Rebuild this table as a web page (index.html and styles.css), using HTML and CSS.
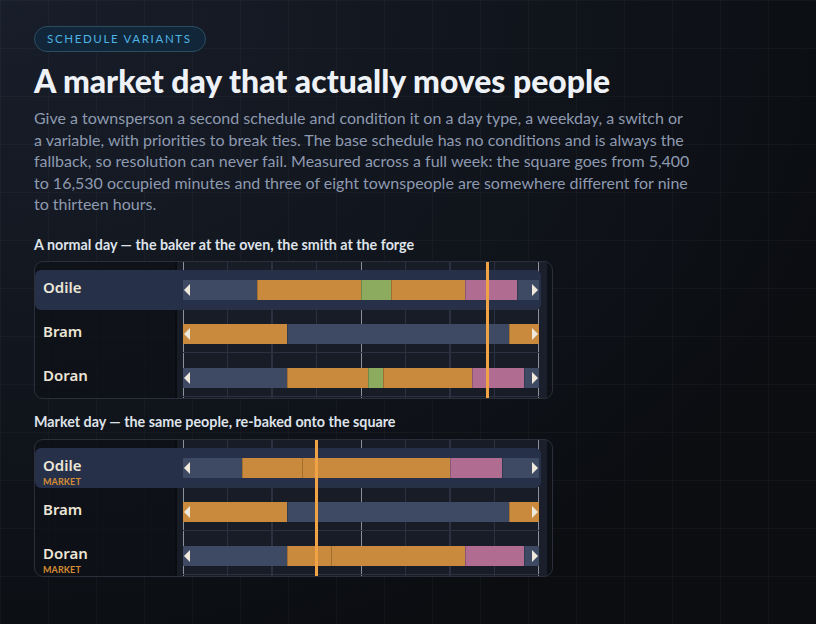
FILE: index.html
```html
<!DOCTYPE html>
<html lang="en">
<head>
<meta charset="utf-8">
<title>Schedule variants</title>
<link rel="stylesheet" href="styles.css">
</head>
<body>
<main class="page">
  <span class="badge">SCHEDULE VARIANTS</span>
  <h1 class="title">A market day that actually moves people</h1>
  <p class="lede">Give a townsperson a second schedule and condition it on a day type, a weekday, a switch or a variable, with priorities to break ties. The base schedule has no conditions and is always the fallback, so resolution can never fail. Measured across a full week: the square goes from 5,400 to 16,530 occupied minutes and three of eight townspeople are somewhere different for nine to thirteen hours.</p>

  <h2 class="label">A normal day — the baker at the oven, the smith at the forge</h2>
  <section class="card">
    <div class="hl r1"></div>

    <div class="name r1">Odile</div>
    <div class="lane r1">
      <div class="bar">
        <span class="seg idle" style="flex-basis:20.833%"></span>
        <span class="seg work" style="flex-basis:29.167%"></span>
        <span class="seg food" style="flex-basis:8.333%"></span>
        <span class="seg work" style="flex-basis:20.833%"></span>
        <span class="seg home" style="flex-basis:14.583%"></span>
        <span class="seg idle" style="flex-basis:6.25%"></span>
        <i class="arr left"></i><i class="arr right"></i>
      </div>
    </div>

    <div class="name r2">Bram</div>
    <div class="lane r2">
      <div class="bar">
        <span class="seg work" style="flex-basis:29.167%"></span>
        <span class="seg idle" style="flex-basis:62.5%"></span>
        <span class="seg work" style="flex-basis:8.333%"></span>
        <i class="arr left"></i><i class="arr right"></i>
      </div>
    </div>

    <div class="name r3">Doran</div>
    <div class="lane r3">
      <div class="bar">
        <span class="seg idle" style="flex-basis:29.167%"></span>
        <span class="seg work" style="flex-basis:22.917%"></span>
        <span class="seg food" style="flex-basis:4.167%"></span>
        <span class="seg work" style="flex-basis:25%"></span>
        <span class="seg home" style="flex-basis:14.583%"></span>
        <span class="seg idle" style="flex-basis:4.167%"></span>
        <i class="arr left"></i><i class="arr right"></i>
      </div>
    </div>

    <div class="now" style="--t:85.417"></div>
  </section>

  <h2 class="label">Market day — the same people, re-baked onto the square</h2>
  <section class="card">
    <div class="hl r1"></div>

    <div class="name r1">Odile<span class="tag">MARKET</span></div>
    <div class="lane r1">
      <div class="bar">
        <span class="seg idle" style="flex-basis:16.667%"></span>
        <span class="seg work" style="flex-basis:16.667%"></span>
        <span class="seg work" style="flex-basis:41.667%"></span>
        <span class="seg home" style="flex-basis:14.583%"></span>
        <span class="seg idle" style="flex-basis:10.417%"></span>
        <i class="arr left"></i><i class="arr right"></i>
      </div>
    </div>

    <div class="name r2">Bram</div>
    <div class="lane r2">
      <div class="bar">
        <span class="seg work" style="flex-basis:29.167%"></span>
        <span class="seg idle" style="flex-basis:62.5%"></span>
        <span class="seg work" style="flex-basis:8.333%"></span>
        <i class="arr left"></i><i class="arr right"></i>
      </div>
    </div>

    <div class="name r3">Doran<span class="tag">MARKET</span></div>
    <div class="lane r3">
      <div class="bar">
        <span class="seg idle" style="flex-basis:29.167%"></span>
        <span class="seg work" style="flex-basis:12.5%"></span>
        <span class="seg work" style="flex-basis:37.5%"></span>
        <span class="seg home" style="flex-basis:16.667%"></span>
        <span class="seg idle" style="flex-basis:4.167%"></span>
        <i class="arr left"></i><i class="arr right"></i>
      </div>
    </div>

    <div class="now" style="--t:37.5"></div>
  </section>
</main>
</body>
</html>
```

FILE: styles.css
```css
* { box-sizing: border-box; }

html, body {
  margin: 0;
  height: 100%;
}

body {
  font-family: "Lato", "Noto Sans", sans-serif;
  color: #e8edf3;
  background-color: #0c0e13;
  background-image:
    linear-gradient(to right, rgba(255,255,255,0.028) 1px, transparent 1px),
    linear-gradient(to bottom, rgba(255,255,255,0.028) 1px, transparent 1px),
    radial-gradient(ellipse 900px 700px at 0% 0%, #181e2a 0%, #11151d 55%, #0b0d11 100%);
  background-size: 48px 48px, 48px 48px, 100% 100%;
  overflow: hidden;
}

.page {
  padding: 26px 0 0 34px;
}

.badge {
  display: inline-block;
  height: 26px;
  line-height: 24px;
  padding: 0 13px 0 12px;
  border: 1px solid #2c4c62;
  border-radius: 13px;
  background: #12263a;
  color: #4fb4e4;
  font-size: 11.5px;
  font-weight: 400;
  letter-spacing: 1.65px;
}

.title {
  margin: 10px 0 0;
  font-size: 31.9px;
  line-height: 38px;
  font-weight: 900;
  color: #eef2f7;
}

.lede {
  margin: 7px 0 0;
  width: 658px;
  font-size: 16px;
  line-height: 21.6px;
  color: #8e9ab0;
}

.label {
  margin: 22px 0 8px;
  font-size: 14.3px;
  line-height: 16px;
  font-weight: 700;
  color: #dfe3ea;
}

.card + .label {
  margin-top: 15px;
  margin-bottom: 9px;
}

.card {
  position: relative;
  width: 519px;
  display: grid;
  grid-template-columns: 141px 7px 356px 2px 1fr;
  grid-auto-rows: 44px;
  padding: 3px 0 1px;
  border: 1px solid #2a2f3a;
  border-radius: 9px;
  overflow: hidden;
  background: linear-gradient(to right,
    rgba(13,16,22,0.72) 0 140px,
    #0a0c10 140px 142px,
    #181c26 142px 148px,
    #8b909b 148px 149px,
    #181c26 149px 192px,
    #2b3140 192px 193.5px,
    #181c26 193.5px 236.5px,
    #2b3140 236.5px 238px,
    #181c26 238px 281px,
    #2b3140 281px 282.5px,
    #181c26 282.5px 326px,
    #8b909b 326px 327px,
    #181c26 327px 370px,
    #2b3140 370px 371.5px,
    #181c26 371.5px 414.5px,
    #2b3140 414.5px 416px,
    #181c26 416px 459px,
    #2b3140 459px 460.5px,
    #181c26 460.5px 503px,
    #8b909b 503px 504px,
    #1a1f2b 504px 512px,
    rgba(13,16,22,0.72) 512px);
}

.r1 { grid-row: 1; }
.r2 { grid-row: 2; }
.r3 { grid-row: 3; }

.hl {
  grid-column: 1 / 5;
  margin-top: 5px;
  margin-bottom: -1px;
  border-radius: 6px;
  background: #263149;
}

.name {
  grid-column: 1;
  padding: 13px 0 0 8px;
  font-family: "Noto Sans", "Lato", sans-serif;
  font-size: 15px;
  line-height: 18px;
  font-weight: 600;
  color: #ece6d7;
}

.tag {
  display: block;
  margin-top: 2px;
  font-family: "Lato", sans-serif;
  font-size: 9px;
  line-height: 11px;
  font-weight: 700;
  letter-spacing: 0.1px;
  color: #d48b34;
}

.lane {
  grid-column: 3;
  padding-top: 15px;
  border-bottom: 1.5px solid #2b3140;
}

.bar {
  position: relative;
  display: flex;
  height: 20px;
}

.seg {
  flex-grow: 0;
  flex-shrink: 0;
  height: 100%;
}

.seg + .seg {
  box-shadow: inset 1px 0 0 rgba(0,0,0,0.2);
}

.idle { background: #3e4a64; }
.work { background: #c98a3e; }
.food { background: #8cab5f; }
.home { background: #b06d91; }

.arr {
  position: absolute;
  top: 4px;
  width: 0;
  height: 0;
  border-top: 6px solid transparent;
  border-bottom: 6px solid transparent;
}

.arr.left {
  left: 1px;
  border-right: 6px solid #efe9dc;
}

.arr.right {
  right: 1px;
  border-left: 6px solid #efe9dc;
}

.now {
  position: absolute;
  top: 0;
  bottom: 0;
  left: calc(148px + var(--t) * 3.56px - 1.5px);
  width: 3px;
  background: #f0a345;
  z-index: 2;
}
```
